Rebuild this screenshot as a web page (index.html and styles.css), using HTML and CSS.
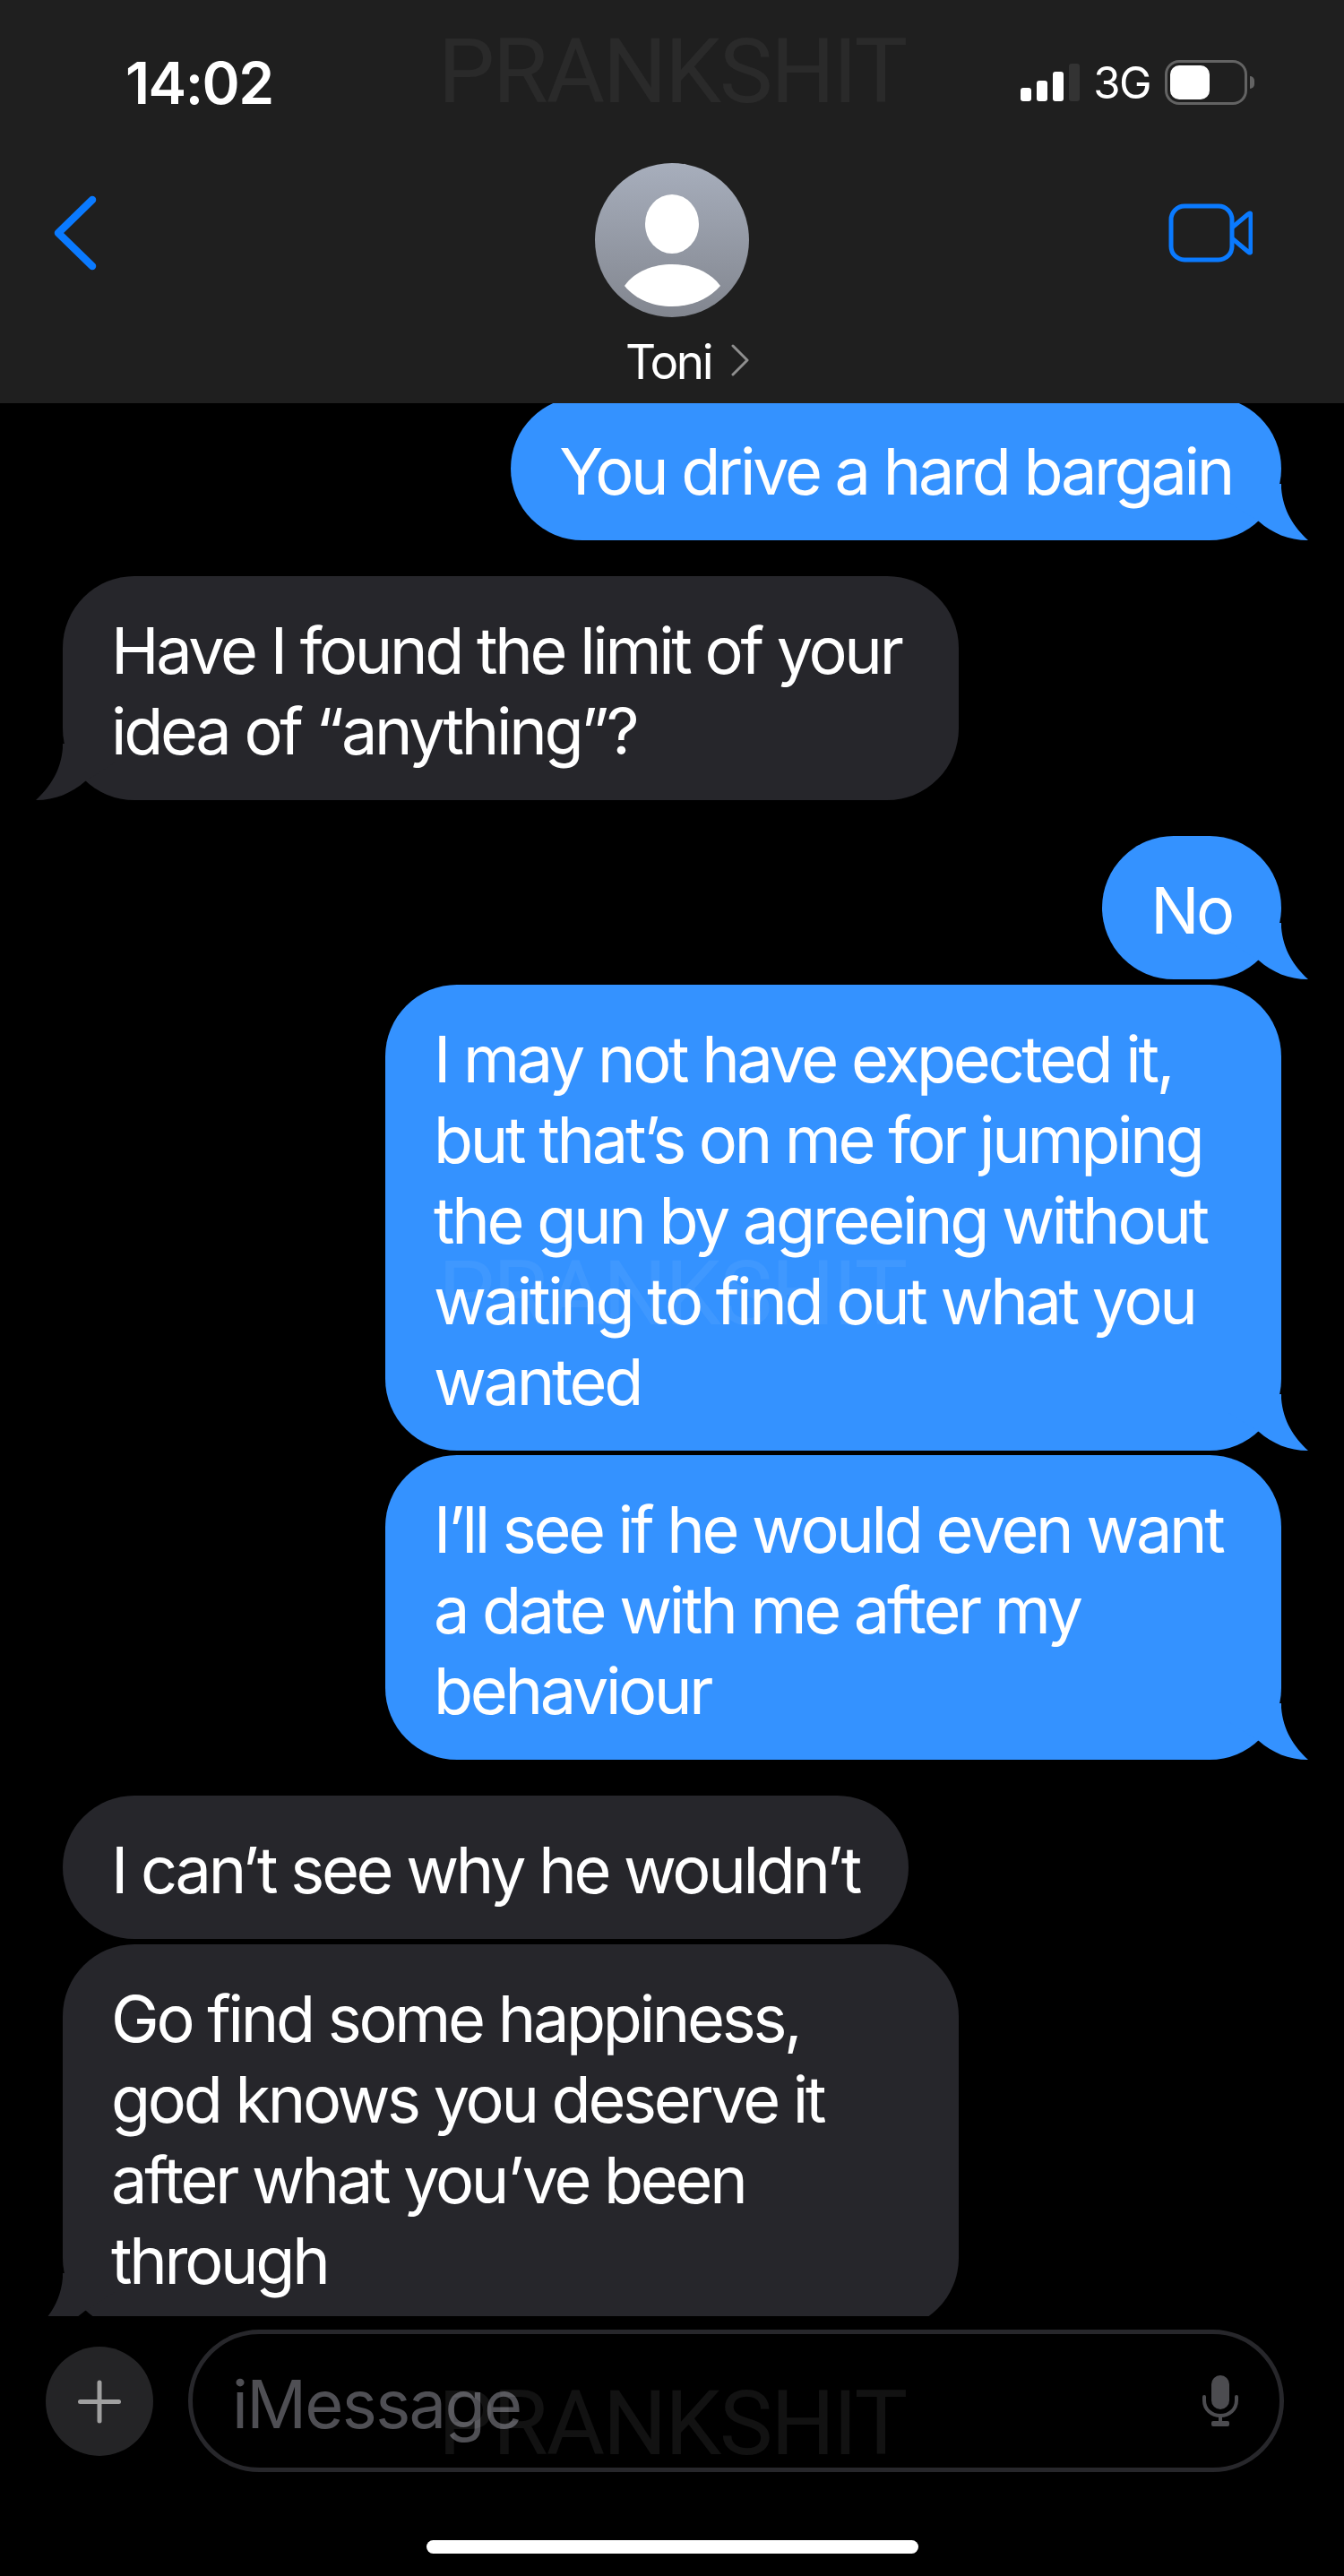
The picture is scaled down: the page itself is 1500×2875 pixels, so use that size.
FILE: index.html
```html
<!DOCTYPE html>
<html lang="en">
<head>
    <meta charset="UTF-8">
    <title>Toni</title>
    <link rel="stylesheet" href="styles.css">
</head>
<body>
    <svg class="defs" width="0" height="0">
        <symbol id="tail" viewBox="0 0 90 63">
            <path d="M20 0H60V5C62 30 74 48 90 63C68 63 50 55 35 42L0 20Z"/>
        </symbol>
    </svg>

    <header class="header">
        <div class="status">
            <span class="time">14:02</span>
            <div class="status-right">
                <div class="signal">
                    <i class="bar bar-1"></i>
                    <i class="bar bar-2"></i>
                    <i class="bar bar-3"></i>
                    <i class="bar bar-4"></i>
                </div>
                <span class="network">3G</span>
                <div class="battery"><i class="battery-level"></i></div>
                <i class="battery-nub"></i>
            </div>
        </div>
        <nav class="nav">
            <svg class="back" width="50" height="84" viewBox="0 0 50 84">
                <path d="M44 5L6 42L44 79" fill="none" stroke="#0a7aff" stroke-width="8.5" stroke-linecap="round" stroke-linejoin="round"/>
            </svg>
            <div class="contact">
                <svg class="avatar" width="172" height="172" viewBox="0 0 172 172">
                    <defs>
                        <linearGradient id="avatar-bg" x1="0" y1="0" x2="0" y2="1">
                            <stop offset="0" stop-color="#a7aebc"/>
                            <stop offset="1" stop-color="#82868f"/>
                        </linearGradient>
                    </defs>
                    <circle cx="86" cy="86" r="86" fill="url(#avatar-bg)"/>
                    <ellipse cx="86" cy="68" rx="30" ry="33" fill="#fff"/>
                    <path d="M33 137C45 120 66 113 86 113C106 113 127 120 140 137C126 153 106 160 86 160C66 160 46 153 33 137Z" fill="#fff"/>
                </svg>
                <div class="contact-name">
                    <span>Toni</span>
                    <svg class="contact-more" width="20" height="36" viewBox="0 0 20 36">
                        <path d="M2 2L18 18L2 34" fill="none" stroke="#8e8e8e" stroke-width="3" stroke-linecap="round" stroke-linejoin="round"/>
                    </svg>
                </div>
            </div>
            <svg class="video" width="94" height="66" viewBox="0 0 94 66">
                <rect x="3" y="3" width="68" height="60" rx="15" fill="none" stroke="#0a7aff" stroke-width="5"/>
                <path d="M71 27L89 12C91 10 92 11 92 13V53C92 55 91 56 89 54L71 39" fill="none" stroke="#0a7aff" stroke-width="5" stroke-linejoin="round"/>
            </svg>
        </nav>
    </header>

    <main class="thread">
        <div class="bubble sent first">You drive a hard bargain<svg class="tail"><use href="#tail"/></svg></div>
        <div class="bubble received wide">Have I found the limit of your idea of “anything”?<svg class="tail"><use href="#tail"/></svg></div>
        <div class="bubble sent">No<svg class="tail"><use href="#tail"/></svg></div>
        <div class="bubble sent wide same">I may not have expected it, but that’s on me for jumping the gun by agreeing without waiting to find out what you wanted<svg class="tail"><use href="#tail"/></svg></div>
        <div class="bubble sent wide same">I’ll see if he would even want a date with me after my behaviour<svg class="tail"><use href="#tail"/></svg></div>
        <div class="bubble received">I can’t see why he wouldn’t</div>
        <div class="bubble received wide same">Go find some happiness, god knows you deserve it after what you’ve been through<svg class="tail"><use href="#tail"/></svg></div>
    </main>

    <footer class="composer">
        <div class="plus"></div>
        <div class="input">
            <span class="placeholder">iMessage</span>
            <svg width="42" height="58" viewBox="0 0 42 58">
                <rect x="11" y="0" width="20" height="38" rx="10" fill="#4c4c50"/>
                <path d="M3 24V28C3 38 11 45 21 45C31 45 39 38 39 28V24" fill="none" stroke="#4c4c50" stroke-width="4" stroke-linecap="round"/>
                <path d="M21 45V52" stroke="#4c4c50" stroke-width="4"/>
                <rect x="11" y="51" width="20" height="6" rx="2" fill="#4c4c50"/>
            </svg>
        </div>
    </footer>
    <div class="home"><i class="home-bar"></i></div>

    <span class="watermark mark-top">PRANKSHIT</span>
    <span class="watermark mark-mid">PRANKSHIT</span>
    <span class="watermark mark-bottom">PRANKSHIT</span>
</body>
</html>
```

FILE: styles.css
```css
* {
    box-sizing: border-box;
}
body {
    position: relative;
    width: 1500px;
    height: 2875px;
    margin: 0;
    overflow: hidden;
    background-color: #000;
    color: #fff;
    font-family: Inter, "Liberation Sans", sans-serif;
}
.defs {
    position: absolute;
}

/* header */
.header {
    height: 450px;
    background-color: #1f1f1f;
}
.status {
    display: flex;
    justify-content: space-between;
    align-items: center;
    height: 182px;
    padding: 2px 100px 0 140px;
}
.time {
    font-size: 64px;
    font-weight: 600;
    letter-spacing: -1.5px;
}
.status-right {
    display: flex;
    align-items: center;
}
.signal {
    display: flex;
    align-items: flex-end;
    gap: 6px;
    height: 42px;
}
.bar {
    width: 12px;
    border-radius: 3px;
    background-color: #fff;
}
.bar-1 {
    height: 15px;
}
.bar-2 {
    height: 23px;
}
.bar-3 {
    height: 33px;
}
.bar-4 {
    height: 42px;
    background-color: #333;
}
.network {
    margin-left: 15px;
    font-size: 49px;
    letter-spacing: -1.5px;
}
.battery {
    width: 92px;
    height: 50px;
    margin-left: 16px;
    padding: 3px;
    border: 3px solid #636363;
    border-radius: 16px;
}
.battery-level {
    display: block;
    width: 44px;
    height: 38px;
    border-radius: 10px;
    background-color: #fff;
}
.battery-nub {
    width: 5px;
    height: 14px;
    margin-left: 3px;
    border-radius: 0 7px 7px 0;
    background-color: #636363;
}
.nav {
    display: grid;
    grid-template-columns: 1fr auto 1fr;
    align-items: start;
}
.back {
    margin-top: 36px;
    margin-left: 59px;
}
.contact {
    display: flex;
    flex-direction: column;
    align-items: center;
}
.contact-name {
    display: flex;
    align-items: flex-start;
    gap: 22px;
    margin-top: 18px;
    margin-left: 34px;
    font-size: 53px;
    line-height: 64px;
    letter-spacing: -2.5px;
}
.contact-more {
    margin-top: 12px;
}
.video {
    justify-self: end;
    margin-top: 45px;
    margin-right: 102px;
}

/* messages */
.thread {
    display: flex;
    flex-direction: column;
    height: 2135px;
    padding: 0 70px;
    overflow: hidden;
}
.bubble {
    position: relative;
    flex: none;
    margin-top: 40px;
    padding: 38px 55px 32px 54px;
    border-radius: 80px;
    font-size: 72px;
    line-height: 90px;
    letter-spacing: -3.3px;
}
.bubble.first {
    margin-top: -7px;
}
.bubble.same {
    margin-top: 5.5px;
}
.bubble.wide {
    width: 1000px;
}
.sent {
    align-self: flex-end;
    background-color: #3492ff;
}
.received {
    align-self: flex-start;
    background-color: #26262b;
}
.tail {
    position: absolute;
    bottom: 0;
    width: 90px;
    height: 63px;
}
.sent .tail {
    right: -30px;
    fill: #3492ff;
}
.received .tail {
    left: -30px;
    fill: #26262b;
    transform: scaleX(-1);
}

/* composer */
.composer {
    display: flex;
    align-items: center;
    gap: 39px;
    height: 174px;
    padding: 15px 67px 0 51px;
}
.plus {
    position: relative;
    flex: none;
    width: 120px;
    height: 122px;
    border-radius: 50%;
    background-color: #242426;
}
.plus::before,
.plus::after {
    content: "";
    position: absolute;
    top: 59px;
    left: 36px;
    width: 48px;
    height: 5px;
    border-radius: 3px;
    background-color: #a0a0a0;
}
.plus::after {
    transform: rotate(90deg);
}
.input {
    display: flex;
    flex: 1;
    justify-content: space-between;
    align-items: center;
    height: 159px;
    padding: 0 45px 0 44px;
    border: 5px solid #27272b;
    border-radius: 80px;
}
.placeholder {
    padding-top: 6px;
    font-size: 74px;
    letter-spacing: -1.7px;
    color: #4f4f54;
}
.home {
    display: flex;
    justify-content: center;
    padding-top: 76px;
}
.home-bar {
    width: 549px;
    height: 15px;
    border-radius: 8px;
    background-color: #fff;
}

/* watermark sits over everything */
.watermark {
    position: absolute;
    left: 489px;
    font-family: Roboto, sans-serif;
    font-size: 100px;
    font-weight: 400;
    line-height: 100px;
    letter-spacing: -2px;
    color: rgba(255, 255, 255, 0.05);
}
.mark-top {
    top: 30px;
}
.mark-mid {
    top: 1394px;
    color: rgba(255, 255, 255, 0.06);
}
.mark-bottom {
    top: 2655px;
    color: rgba(255, 255, 255, 0.07);
}
```
